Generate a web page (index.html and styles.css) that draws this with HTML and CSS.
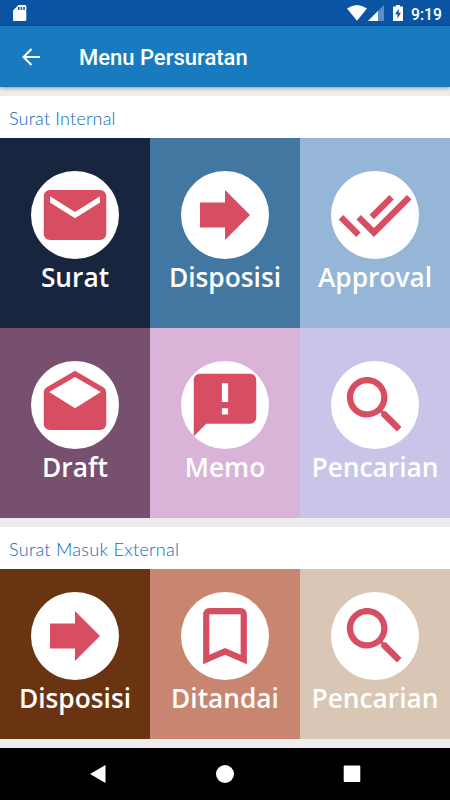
FILE: index.html
```html
<!DOCTYPE html>
<html lang="id">
<head>
<meta charset="utf-8">
<title>Menu Persuratan</title>
<link rel="stylesheet" href="styles.css">
</head>
<body>
<svg class="defs" aria-hidden="true">
  <symbol id="mail" viewBox="0 0 24 24"><path d="M20 4H4c-1.100 0-1.990.9-1.990 2L2 18c0 1.100.9 2 2 2h16c1.100 0 2-.9 2-2V6c0-1.100-.9-2-2-2zm0 4l-8 5-8-5V6l8 5 8-5v2z"/></symbol>
  <symbol id="forward" viewBox="0 0 24 24"><path d="M12 8V4l8 8-8 8v-4H4V8z"/></symbol>
  <symbol id="checks" viewBox="0 0 24 24"><path d="M18 7l-1.410-1.410-6.340 6.340 1.410 1.410L18 7zm4.240-1.410L11.660 16.170 7.480 12l-1.410 1.410L11.660 19l12-12-1.420-1.410zM.41 13.410L6 19l1.410-1.410L1.830 12 .41 13.410z"/></symbol>
  <symbol id="draft" viewBox="0 0 24 24"><path d="M21.990 8c0-.72-.37-1.350-.94-1.700L12 1 2.950 6.300C2.380 6.650 2 7.280 2 8v10c0 1.100.9 2 2 2h16c1.100 0 2-.9 2-2l-.01-10zM12 13L3.740 7.840 12 3l8.260 4.840L12 13z"/></symbol>
  <symbol id="memo" viewBox="0 0 24 24"><path fill-rule="evenodd" d="M20 2H4c-1.100 0-1.990.9-1.990 2L2 22l4-4h14c1.100 0 2-.9 2-2V4c0-1.100-.9-2-2-2zM11 5h2v6h-2zM11 13h2v2h-2z"/></symbol>
  <symbol id="search" viewBox="0 0 24 24"><path d="M15.500 14h-.79l-.28-.27C15.410 12.590 16 11.110 16 9.500 16 5.910 13.090 3 9.500 3S3 5.910 3 9.500 5.910 16 9.500 16c1.610 0 3.090-.59 4.230-1.570l.27.28v.79l5 4.990L20.490 19l-4.990-5zm-6 0C7.010 14 5 11.990 5 9.500S7.010 5 9.500 5 14 7.010 14 9.500 11.990 14 9.500 14z"/></symbol>
  <symbol id="bookmark" viewBox="0 0 24 24"><path d="M17 3H7c-1.100 0-1.990.9-1.990 2L5 21l7-3 7 3V5c0-1.100-.9-2-2-2zm0 15l-5-2.180L7 18V5h10v13z"/></symbol>
</svg>
<div class="screen">
  <header class="status">
    <svg class="sd" viewBox="0 0 14 17"><path fill="#fff" d="M5.500 0H12q1.300 0 1.300 1.300V15q0 1-1.300 1H1.300Q0 16 0 15V5.500z"/><path fill="#0b54a4" d="M5 2h1.500v3H5zM7.700 2h1.500v3H7.700zM10.300 2h1.500v3h-1.500z"/></svg>
    <div class="status-icons">
      <svg class="wifi" viewBox="0 0 20 16"><path fill="#fff" d="M0 3.500Q10-3.500 20 3.500L10 15.700z"/></svg>
      <svg class="signal" viewBox="0 0 16 16"><path fill="#5b8fc7" d="M16 0v16H0z"/><path fill="#fff" d="M10 6v10H0z"/></svg>
      <svg class="battery" viewBox="0 0 10 16"><path fill="#fff" d="M3 0h4v1.500h3V16H0V1.500h3z"/><path fill="#0b54a4" d="M6 3.500L2 9.300h2.500v4.200L8 7.700H5.600z"/></svg>
      <span class="clock">9:19</span>
    </div>
  </header>
  <div class="toolbar">
    <svg class="back" viewBox="0 0 18 18"><path fill="none" stroke="#fff" stroke-width="2" d="M18 9H1.700M9.500 1L1.500 9l8 8"/></svg>
    <h1 class="title">Menu Persuratan</h1>
  </div>
  <main class="content">
    <section class="group">
      <h2 class="heading"><span class="heading-internal">Surat Internal</span></h2>
      <div class="grid">
        <div class="tile navy"><span class="disc"><svg><use href="#mail"/></svg></span><span class="label">Surat</span></div>
        <div class="tile steel"><span class="disc"><svg><use href="#forward"/></svg></span><span class="label">Disposisi</span></div>
        <div class="tile sky"><span class="disc"><svg><use href="#checks"/></svg></span><span class="label">Approval</span></div>
        <div class="tile plum"><span class="disc"><svg><use href="#draft"/></svg></span><span class="label">Draft</span></div>
        <div class="tile pink"><span class="disc"><svg><use href="#memo"/></svg></span><span class="label">Memo</span></div>
        <div class="tile lilac"><span class="disc"><svg><use href="#search"/></svg></span><span class="label">Pencarian</span></div>
      </div>
    </section>
    <section class="group">
      <h2 class="heading"><span class="heading-external">Surat Masuk External</span></h2>
      <div class="grid short">
        <div class="tile brown"><span class="disc"><svg><use href="#forward"/></svg></span><span class="label">Disposisi</span></div>
        <div class="tile clay"><span class="disc"><svg><use href="#bookmark"/></svg></span><span class="label">Ditandai</span></div>
        <div class="tile sand"><span class="disc"><svg><use href="#search"/></svg></span><span class="label">Pencarian</span></div>
      </div>
    </section>
  </main>
  <nav class="navbar">
    <svg viewBox="0 0 18 18"><path d="M16.500 0v18L1 9z"/></svg>
    <svg viewBox="0 0 18 18"><circle cx="9" cy="9" r="9"/></svg>
    <svg viewBox="0 0 18 18"><rect x=".7" y=".5" width="16.600" height="16.600" rx="1"/></svg>
  </nav>
</div>
</body>
</html>
```
FILE: styles.css
```css
* { box-sizing: border-box; }
body { margin: 0; background: #000; }
.defs { display: none; }
.screen {
  display: flex;
  flex-direction: column;
  width: 450px;
  height: 800px;
  overflow: hidden;
  background: #ededed;
  font-family: Roboto, sans-serif;
}
svg { display: block; flex: none; }
.status {
  display: flex;
  justify-content: space-between;
  flex: none;
  height: 26px;
  padding: 5px 8px 0 13px;
  background: #0b54a4;
}
.sd { width: 14px; height: 17px; }
.status-icons { display: flex; }
.wifi { width: 20px; height: 16px; }
.signal { width: 16px; height: 16px; margin-left: 1px; }
.battery { width: 10px; height: 16px; margin-left: 9px; }
.clock {
  margin-left: 8px;
  color: #fff;
  font-size: 15.700px;
  line-height: 19px;
  font-weight: 500;
  width: 31px;
  white-space: nowrap;
}
.toolbar {
  display: flex;
  align-items: center;
  flex: none;
  height: 61px;
  padding-left: 22px;
  background: #187bc0;
  box-shadow: 0 1px 4px rgba(0, 0, 0, .4);
  z-index: 1;
}
.back { width: 18px; height: 18px; }
.title {
  margin: 2px 0 0 39px;
  color: #fff;
  font-size: 22px;
  font-weight: 500;
  line-height: 30px;
}
.content {
  display: flex;
  flex-direction: column;
  gap: 9px;
  flex: 1;
  padding-top: 9px;
}
.heading {
  display: flex;
  align-items: center;
  height: 41.600px;
  margin: 0;
  padding: 2px 9px 0;
  background: #fff;
  color: #0f68b5;
  font-family: Lato, sans-serif;
  font-size: 18px;
  font-weight: 300;
}
.heading-internal { letter-spacing: .2px; }
.heading-external { letter-spacing: .3px; }
.grid {
  display: grid;
  grid-template-columns: repeat(3, 150px);
  grid-auto-rows: 190.400px;
}
.short { grid-auto-rows: 169.800px; }
.tile {
  display: flex;
  flex-direction: column;
  align-items: center;
  justify-content: center;
}
.short .tile { padding-bottom: 1px; }
.disc {
  display: flex;
  align-items: center;
  justify-content: center;
  width: 88px;
  height: 88px;
  border-radius: 50%;
  background: #fff;
}
.disc svg { width: 76px; height: 76px; padding: .5px; fill: #d74d61; }
.label {
  height: 35.400px;
  color: #fff;
  font-family: "Open Sans", sans-serif;
  font-size: 26.300px;
  font-weight: 600;
  line-height: 36px;
}
.navy { background: #18253f; }
.steel { background: #4277a1; }
.sky { background: #96b6d8; }
.plum { background: #76506e; }
.pink { background: #d9b3d8; }
.lilac { background: #c9c5e9; }
.brown { background: #6a3413; }
.clay { background: #c88670; }
.sand { background: #d9c6b5; }
.navbar {
  display: flex;
  align-items: center;
  justify-content: space-between;
  flex: none;
  height: 52px;
  padding: 0 89px 0 89px;
  background: #000;
}
.navbar svg { width: 18px; height: 18px; fill: #fff; }
```
